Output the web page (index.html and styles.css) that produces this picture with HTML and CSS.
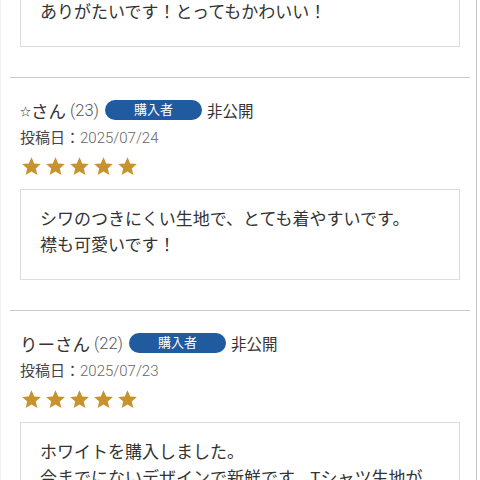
FILE: index.html
```html
<!DOCTYPE html>
<html lang="ja">
<head>
    <meta charset="UTF-8">
    <meta name="viewport" content="width=device-width, initial-scale=1.0">
    <title>レビュー</title>
    <link rel="stylesheet" href="styles.css">
</head>
<body>
    <div class="reviews">
        <!-- previous review, scrolled above -->
        <div class="review review-cut">
            <div class="review-body">
                <p>ありがたいです！とってもかわいい！</p>
            </div>
        </div>

        <div class="review">
            <div class="review-head">
                <span class="name"><span class="mark">☆</span>さん</span>
                <span class="age">(23)</span>
                <span class="badge">購入者</span>
                <span class="private">非公開</span>
            </div>
            <div class="date">投稿日：<span class="num">2025/07/24</span></div>
            <div class="stars">
                <svg viewBox="0 0 24 24"><path d="M12 1.5l3.1 7.1 7.6.6-5.8 5 1.8 7.5L12 17.7l-6.7 4 1.8-7.5-5.8-5 7.6-.6z"/></svg>
                <svg viewBox="0 0 24 24"><path d="M12 1.5l3.1 7.1 7.6.6-5.8 5 1.8 7.5L12 17.7l-6.7 4 1.8-7.5-5.8-5 7.6-.6z"/></svg>
                <svg viewBox="0 0 24 24"><path d="M12 1.5l3.1 7.1 7.6.6-5.8 5 1.8 7.5L12 17.7l-6.7 4 1.8-7.5-5.8-5 7.6-.6z"/></svg>
                <svg viewBox="0 0 24 24"><path d="M12 1.5l3.1 7.1 7.6.6-5.8 5 1.8 7.5L12 17.7l-6.7 4 1.8-7.5-5.8-5 7.6-.6z"/></svg>
                <svg viewBox="0 0 24 24"><path d="M12 1.5l3.1 7.1 7.6.6-5.8 5 1.8 7.5L12 17.7l-6.7 4 1.8-7.5-5.8-5 7.6-.6z"/></svg>
            </div>
            <div class="review-body">
                <p>シワのつきにくい生地で、とても着やすいです。<br>襟も可愛いです！</p>
            </div>
        </div>

        <div class="review">
            <div class="review-head">
                <span class="name">りーさん</span>
                <span class="age">(22)</span>
                <span class="badge">購入者</span>
                <span class="private">非公開</span>
            </div>
            <div class="date">投稿日：<span class="num">2025/07/23</span></div>
            <div class="stars">
                <svg viewBox="0 0 24 24"><path d="M12 1.5l3.1 7.1 7.6.6-5.8 5 1.8 7.5L12 17.7l-6.7 4 1.8-7.5-5.8-5 7.6-.6z"/></svg>
                <svg viewBox="0 0 24 24"><path d="M12 1.5l3.1 7.1 7.6.6-5.8 5 1.8 7.5L12 17.7l-6.7 4 1.8-7.5-5.8-5 7.6-.6z"/></svg>
                <svg viewBox="0 0 24 24"><path d="M12 1.5l3.1 7.1 7.6.6-5.8 5 1.8 7.5L12 17.7l-6.7 4 1.8-7.5-5.8-5 7.6-.6z"/></svg>
                <svg viewBox="0 0 24 24"><path d="M12 1.5l3.1 7.1 7.6.6-5.8 5 1.8 7.5L12 17.7l-6.7 4 1.8-7.5-5.8-5 7.6-.6z"/></svg>
                <svg viewBox="0 0 24 24"><path d="M12 1.5l3.1 7.1 7.6.6-5.8 5 1.8 7.5L12 17.7l-6.7 4 1.8-7.5-5.8-5 7.6-.6z"/></svg>
            </div>
            <div class="review-body">
                <p>ホワイトを購入しました。<br>今までにないデザインで新鮮です。Tシャツ生地が</p>
            </div>
        </div>
    </div>
</body>
</html>
```

FILE: styles.css
```css
/* Basic styles */
body {
    font-family: Roboto, "Noto Sans CJK JP", sans-serif;
    margin: 0;
    padding: 0;
    background-color: #fff;
    color: #333;
    overflow: hidden;
}
.reviews {
    width: 477px;
    border-left: 1px solid #f0f0f0;
    border-right: 1px solid #c8c8c8;
    box-sizing: border-box;
}
.review {
    margin: 0 6px 0 9px;
    padding: 19px 10px 30px;
    border-bottom: 1px solid #c8c8c8;
}
.review-cut {
    padding-top: 0;
    margin-top: -18px;
}

/* header line */
.review-head {
    display: flex;
    align-items: center;
    height: 26px;
    font-size: 17.5px;
}
.name {
    color: #333;
}
.mark {
    font-size: 11px;
    vertical-align: 2px;
}
.age {
    margin-left: 4px;
    color: #555;
    font-size: 16.5px;
    font-weight: 300;
}
.badge {
    display: inline-block;
    width: 97px;
    height: 20px;
    line-height: 20px;
    margin-left: 6px;
    border-radius: 10px;
    background-color: #1f5b9e;
    color: #fff;
    font-size: 13px;
    text-align: center;
}
.private {
    margin-left: 5px;
    font-size: 15.5px;
    color: #333;
}

.date {
    margin-top: 3px;
    line-height: 24px;
    font-size: 15px;
    color: #444;
}
.date .num {
    color: #666;
    font-weight: 300;
}

.stars {
    display: flex;
    gap: 3px;
    margin-top: 4px;
    height: 24px;
    align-items: center;
    padding-left: 1px;
}
.stars svg {
    width: 21px;
    height: 21px;
    fill: #c8922c;
}

/* review text box */
.review-body {
    margin-top: 11px;
    border: 1px solid #dcdcdc;
    padding: 16px 19px 21px;
}
.review-cut .review-body {
    margin-top: 0;
}
.review-body p {
    margin: 0;
    font-size: 17px;
    line-height: 26px;
    color: #333;
}
```
